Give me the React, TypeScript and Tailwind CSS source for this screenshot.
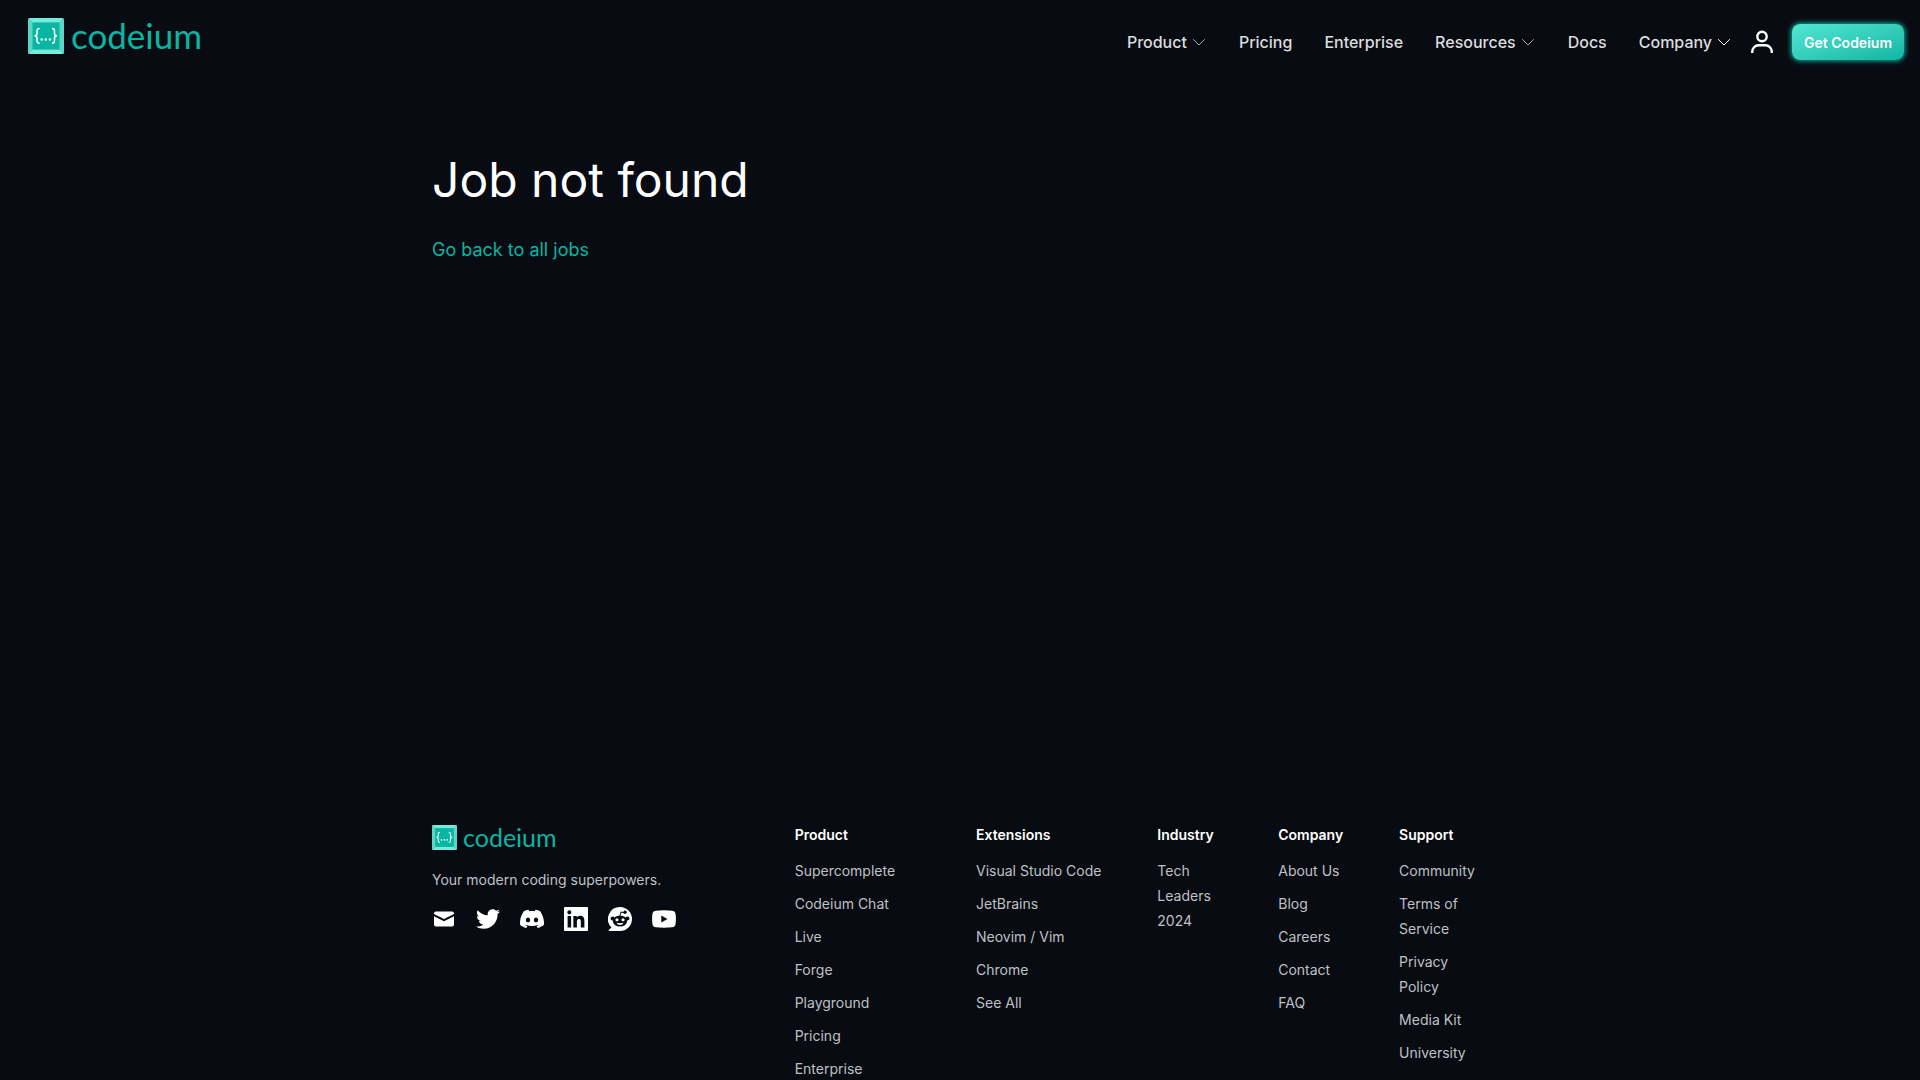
import React from "react";
import { FaTwitter } from "react-icons/fa";
import { SiDiscord } from "react-icons/si";

function LogoMark({ className }: { className: string }) {
  return (
    <svg viewBox="0 0 36 36" className={className} aria-hidden="true">
      <rect width="36" height="36" rx="1.5" fill="#5cd5c3" />
      <path d="M1 0H35L31 4.5H5Z" fill="#76eadb" />
      <path d="M1 36H35L31 31.5H5Z" fill="#76eadb" />
      <rect x="4.5" y="4.5" width="27" height="27" fill="#09b6a2" />
      <g fill="none" stroke="#fff" strokeWidth="1.5">
        <path d="M11.5 10.5C9.5 10.5 9 11.3 9 13V15.5C9 17 8.3 17.8 6.5 17.8C8.3 17.8 9 18.6 9 20V22.7C9 24.3 9.5 25.2 11.5 25.2" />
        <path d="M24 10.5C26 10.5 26.5 11.3 26.5 13V15.5C26.5 17 27.2 17.8 29 17.8C27.2 17.8 26.5 18.6 26.5 20V22.7C26.5 24.3 26 25.2 24 25.2" />
      </g>
      <g fill="#fff">
        <circle cx="13.7" cy="21.5" r="1.2" />
        <circle cx="17.8" cy="21.5" r="1.2" />
        <circle cx="21.9" cy="21.5" r="1.2" />
      </g>
    </svg>
  );
}

function Chevron({ bright }: { bright?: boolean }) {
  return (
    <svg
      viewBox="0 0 16 16"
      className={bright ? "size-4 text-white" : "size-4 text-[#a3a5a8]"}
      fill="none"
      stroke="currentColor"
      strokeLinecap="round"
      strokeLinejoin="round"
      aria-hidden="true"
    >
      <path d="M2.5 5.5L8 11L13.5 5.5" />
    </svg>
  );
}

const nav = [
  { label: "Product", menu: true },
  { label: "Pricing" },
  { label: "Enterprise" },
  { label: "Resources", menu: true },
  { label: "Docs" },
  { label: "Company", menu: true, bright: true },
];

function MailIcon() {
  return (
    <svg viewBox="0 0 24 24" className="size-6" fill="currentColor" aria-hidden="true">
      <path d="M4 4.5H20A2 2 0 0 1 22 6.5V7L12 12L2 7V6.5A2 2 0 0 1 4 4.5Z" />
      <path d="M2 9.2L12 14.2L22 9.2V17.5A2 2 0 0 1 20 19.5H4A2 2 0 0 1 2 17.5Z" />
    </svg>
  );
}

function RedditIcon() {
  return (
    <svg viewBox="0 0 24 24" className="size-6" aria-hidden="true">
      <path
        d="M12 0A12 12 0 1 1 12 24H1.5C.6 24 .3 23.3.9 22.7L3.5 20.5A12 12 0 0 1 12 0Z"
        fill="#fff"
      />
      <g fill="#080b12">
        <ellipse cx="12" cy="14" rx="7.2" ry="5.6" />
        <circle cx="4.6" cy="11.5" r="2" />
        <circle cx="19.4" cy="11.5" r="2" />
        <circle cx="17" cy="5.3" r="1.7" />
        <path d="M11.4 9L12.7 4.6L16.5 5.2L16.3 6.1L13.3 5.7L12.3 9Z" />
      </g>
      <g fill="#fff">
        <ellipse cx="9" cy="12.8" rx="1.6" ry="1.5" />
        <ellipse cx="15" cy="12.8" rx="1.6" ry="1.5" />
        <path d="M8.7 15.8C10.5 16.3 13.5 16.3 15.3 15.8C14.8 17.2 13.5 18 12 18C10.5 18 9.2 17.2 8.7 15.8Z" />
      </g>
    </svg>
  );
}

const socials = [
  { name: "Email", icon: <MailIcon /> },
  { name: "Twitter", icon: <FaTwitter className="size-6" /> },
  { name: "Discord", icon: <SiDiscord className="size-6" /> },
  {
    name: "LinkedIn",
    icon: (
      <svg viewBox="0 0 24 24" className="size-6" fill="currentColor" aria-hidden="true">
        <path
          fillRule="evenodd"
          d="M1 0H23A1 1 0 0 1 24 1V23A1 1 0 0 1 23 24H1A1 1 0 0 1 0 23V1A1 1 0 0 1 1 0ZM3.6 9V20.4H7.1V9ZM5.35 3.3A2.05 2.05 0 1 0 5.35 7.4A2.05 2.05 0 1 0 5.35 3.3ZM9.35 9V20.4H12.9V14.8C12.9 13.3 13.2 11.9 15 11.9C16.8 11.9 16.8 13.5 16.8 14.9V20.4H20.4V14.2C20.4 11.1 19.7 8.7 16.1 8.7C14.4 8.7 13.2 9.7 12.8 10.6H12.75V9Z"
        />
      </svg>
    ),
  },
  { name: "Reddit", icon: <RedditIcon /> },
  {
    name: "YouTube",
    icon: (
      <svg viewBox="0 0 24 24" className="size-6" fill="currentColor" aria-hidden="true">
        <path
          fillRule="evenodd"
          d="M4 3.7Q12 3 20 3.7Q23.3 4 23.6 7.2Q24.2 12 23.6 16.8Q23.3 20 20 20.3Q12 21 4 20.3Q.7 20 .4 16.8Q-.2 12 .4 7.2Q.7 4 4 3.7ZM9.3 8.5V15.5L15.5 12Z"
        />
      </svg>
    ),
  },
];

const columns = [
  {
    title: "Product",
    span: "col-span-3",
    links: ["Supercomplete", "Codeium Chat", "Live", "Forge", "Playground", "Pricing", "Enterprise"],
  },
  {
    title: "Extensions",
    span: "col-span-3",
    links: ["Visual Studio Code", "JetBrains", "Neovim / Vim", "Chrome", "See All"],
  },
  { title: "Industry", span: "col-span-2", links: ["Tech Leaders 2024"] },
  {
    title: "Company",
    span: "col-span-2",
    links: ["About Us", "Blog", "Careers", "Contact", "FAQ"],
  },
  {
    title: "Support",
    span: "col-span-2",
    links: ["Community", "Terms of Service", "Privacy Policy", "Media Kit", "University"],
  },
];

export default function App() {
  return (
    <div className="min-h-screen bg-[#080b12] font-['Inter',sans-serif] text-white">
      <header className="flex items-start justify-between pt-[18px] pr-4 pl-7">
        <a href="#" className="flex items-start gap-[7px]">
          <LogoMark className="size-9" />
          <span className="font-['Lato',sans-serif] text-[35px] leading-[34px] text-[#09b6a2]">codeium</span>
        </a>
        <div className="flex items-center pt-[6px]">
          <nav className="flex items-center gap-8 text-base font-medium text-[#dcdddf]">
            {nav.map((n) =>
              n.menu ? (
                <button key={n.label} type="button" className="flex items-center gap-1">
                  {n.label}
                  <Chevron bright={n.bright} />
                </button>
              ) : (
                <a key={n.label} href="#">
                  {n.label}
                </a>
              ),
            )}
          </nav>
          <a href="#" aria-label="Account" className="ml-[18px]">
            <svg viewBox="0 0 24 24" className="size-6" fill="none" stroke="#fff" strokeWidth="2.4" aria-hidden="true">
              <circle cx="12" cy="6.5" r="4.7" />
              <path d="M2.2 23V22C2.2 18.2 5 15.3 8.5 15.3H15.5C19 15.3 21.8 18.2 21.8 22V23" />
            </svg>
          </a>
          <button
            type="button"
            className="ml-[18px] h-9 rounded-lg bg-linear-to-br from-[#50e7d5] to-[#09b6a2] px-3 pt-px text-sm font-semibold shadow-[0_0_5px_1px_#09b6a2]"
          >
            Get Codeium
          </button>
        </div>
      </header>

      <main className="mx-auto min-h-[765px] w-full max-w-[1056px] pt-[84px]">
        <h1 className="text-5xl leading-[72px]">Job not found</h1>
        <a href="#" className="mt-5 inline-block text-lg leading-7 text-[#09b6a2]">
          Go back to all jobs
        </a>
      </main>

      <footer className="mx-auto grid w-full max-w-[1056px] grid-cols-[repeat(18,minmax(0,1fr))] gap-x-8 text-sm leading-[25px] text-[#bfc1c4]">
        <div className="col-span-6">
          <a href="#" className="flex items-center gap-[6px]">
            <LogoMark className="size-[25px]" />
            <span className="font-['Lato',sans-serif] text-[25px] leading-[25px] text-[#09b6a2]">codeium</span>
          </a>
          <p className="mt-[17px]">Your modern coding superpowers.</p>
          <div className="mt-[15px] flex gap-5 text-white">
            {socials.map((s) => (
              <a key={s.name} href="#" aria-label={s.name}>
                {s.icon}
              </a>
            ))}
          </div>
        </div>
        {columns.map((c) => (
          <div key={c.title} className={c.span}>
            <h2 className="leading-5 font-semibold text-white">{c.title}</h2>
            <ul className="mt-[13px] flex flex-col gap-2">
              {c.links.map((l) => (
                <li key={l}>
                  <a href="#">{l}</a>
                </li>
              ))}
            </ul>
          </div>
        ))}
      </footer>
    </div>
  );
}
